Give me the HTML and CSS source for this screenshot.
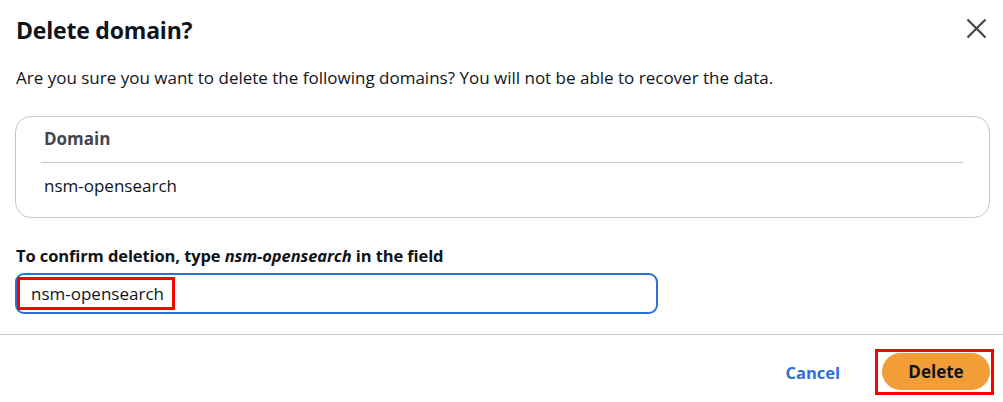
FILE: index.html
```html
<!DOCTYPE html>
<html lang="en">
<head>
<meta charset="utf-8">
<title>Delete domain?</title>
<link rel="stylesheet" href="styles.css">
</head>
<body>
<div class="modal">
  <header class="head">
    <h2 class="title">Delete domain?</h2>
    <button class="close" aria-label="Close">
      <svg width="21" height="21" viewBox="0 0 21 21"><path d="M1.5 1.5 L19.5 19.5 M19.5 1.5 L1.5 19.5" stroke="#424650" stroke-width="2.2" fill="none"/></svg>
    </button>
  </header>
  <div class="content">
    <p class="msg">Are you sure you want to delete the following domains? You will not be able to recover the data.</p>
    <div class="table">
      <div class="th">Domain</div>
      <div class="td">nsm-opensearch</div>
    </div>
    <label class="label">To confirm deletion, type <em>nsm-opensearch</em> in the field</label>
    <div class="input"><span class="mark">nsm-opensearch</span></div>
  </div>
  <footer class="foot">
    <button class="cancel">Cancel</button>
    <span class="mark-btn"><button class="delete">Delete</button></span>
  </footer>
</div>
</body>
</html>
```

FILE: styles.css
```css
html, body {
  margin: 0;
  padding: 0;
  background: #ffffff;
}
body {
  font-family: "Open Sans", "Noto Sans", sans-serif;
  color: #0f141a;
}
.modal {
  width: 1003px;
  height: 402px;
  display: flex;
  flex-direction: column;
}
.head {
  display: flex;
  align-items: center;
  justify-content: space-between;
  padding: 14px 16px 0 16px;
  height: 32px;
}
.title {
  margin: 0;
  font-size: 23px;
  font-weight: 700;
  letter-spacing: -0.2px;
}
.close {
  background: none;
  border: 0;
  padding: 0;
  width: 21px;
  height: 21px;
  margin-top: -3px;
  display: flex;
}
.content {
  padding: 0 13px 0 15px;
  display: flex;
  flex-direction: column;
}
.msg {
  margin: 20px 0 0 1px;
  font-size: 17px;
  line-height: 24px;
}
.table {
  margin-top: 26px;
  border: 1px solid #c6c6cd;
  border-radius: 16px;
  height: 100px;
  padding: 0 26px 0 25px;
}
.th {
  font-weight: 700;
  color: #424650;
  font-size: 17px;
  line-height: 24px;
  padding: 10px 0 11px 3px;
  border-bottom: 1px solid #c6c6cd;
}
.td {
  font-size: 17px;
  line-height: 24px;
  padding: 11px 0 0 3px;
}
.label {
  margin: 26px 0 0 1px;
  font-size: 16.5px;
  font-weight: 700;
  line-height: 24px;
  letter-spacing: -0.1px;
}
.label em {
  font-style: italic;
}
.input {
  margin-top: 5px;
  width: 639px;
  height: 37px;
  border: 2px solid #2f6fd8;
  border-radius: 9px;
  display: flex;
  align-items: center;
}
.mark {
  border: 3px solid #ff0000;
  padding: 0 8px 0 11px;
  height: 27px;
  display: flex;
  align-items: center;
  font-size: 17px;
}
.foot {
  margin-top: 20px;
  border-top: 1px solid #c6c6cd;
  display: flex;
  justify-content: flex-end;
  align-items: center;
  padding: 14px 9px 0 0;
}
.cancel {
  background: none;
  border: 0;
  font-family: inherit;
  font-weight: 700;
  font-size: 16.5px;
  color: #2f6fd8;
  padding: 0;
  margin-right: 35px;
}
.mark-btn {
  border: 3px solid #ff0000;
  padding: 1px 1px 2px 4px;
  display: flex;
}
.delete {
  width: 108px;
  height: 37px;
  border: 0;
  border-radius: 19px;
  background: #f29d38;
  font-family: inherit;
  font-weight: 700;
  font-size: 17px;
  color: #0f141a;
  padding: 0;
}
```
